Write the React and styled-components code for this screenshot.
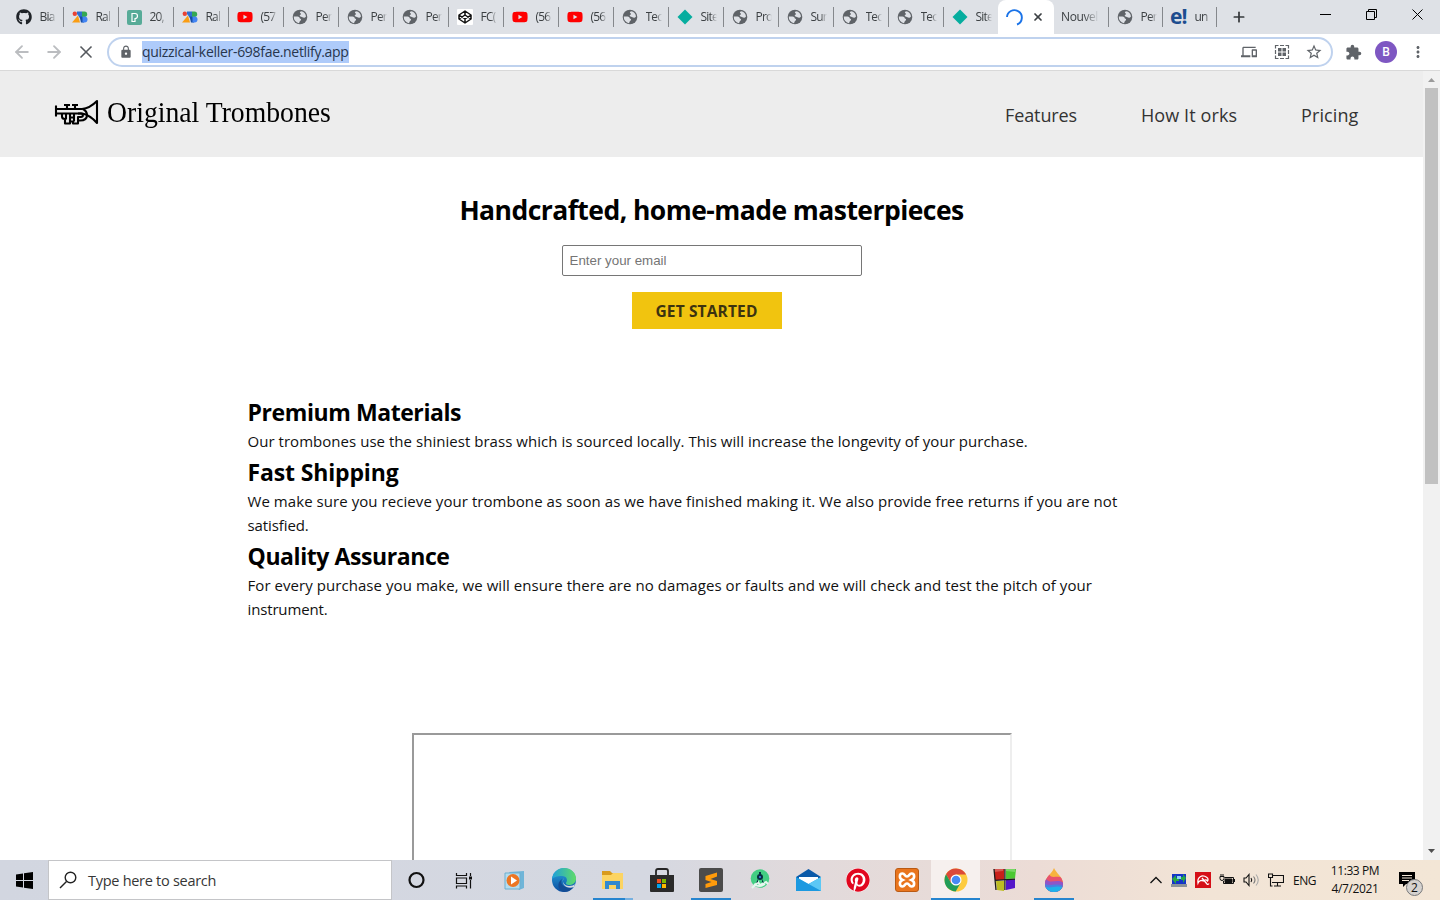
import React from 'react';
import styled, { createGlobalStyle, css } from 'styled-components';
import { FaGithub, FaYoutube, FaPinterest } from 'react-icons/fa';
import { MdLock, MdExtension, MdStarBorder, MdDevices, MdMoreVert } from 'react-icons/md';
import { ArrowLeft, ArrowRight, X, Plus } from 'lucide-react';

const Global = createGlobalStyle`
  * { box-sizing: border-box; }
  body { margin: 0; overflow: hidden; background: #fff; font-family: 'Open Sans', 'Noto Sans', sans-serif; }
  svg { display: block; flex: none; }
`;

const Screen = styled.div`
  width: 1440px;
  height: 900px;
  display: flex;
  flex-direction: column;
  overflow: hidden;
`;

/* Browser tabs */
const TabStrip = styled.div`
  height: 34px;
  flex: none;
  background: #dee1e6;
  display: flex;
  padding-left: 8px;
`;
const Tab = styled.div`
  width: ${p => p.$w || 55}px;
  flex: none;
  height: 34px;
  display: flex;
  align-items: center;
  padding-left: ${p => p.$pad ?? 8}px;
  background: linear-gradient(#85888c, #85888c) right 0 top 7px / 1px 20px no-repeat;
  ${p => p.$plain && css`background: none;`}
`;
const TabTitle = styled.span`
  margin-left: ${p => p.$gap ?? 7.5}px;
  width: ${p => p.$w || 16}px;
  overflow: hidden;
  white-space: nowrap;
  font-size: 12px;
  letter-spacing: ${p => p.$ls ?? -0.8}px;
  line-height: 18px;
  color: #3c4043;
  mask-image: linear-gradient(90deg, #000 60%, transparent);
`;
const ActiveTab = styled.div`
  width: 56px;
  flex: none;
  height: 34px;
  background: #fff;
  border-radius: 8px 8px 0 0;
  display: flex;
  align-items: center;
  gap: 9px;
  padding-left: 8px;
  margin-left: -1px;
`;
const NewTab = styled.div`
  display: flex;
  align-items: center;
  margin-left: 14px;
  color: #35383b;
`;
const WindowButtons = styled.div`
  display: flex;
  margin-left: auto;
  height: 28px;
  align-items: center;
  gap: 35px;
  padding-right: 17px;
`;

/* Address bar */
const Toolbar = styled.div`
  height: 37px;
  flex: none;
  background: #fff;
  border-bottom: 1px solid #d9d9d9;
  display: flex;
  align-items: center;
`;
const NavButtons = styled.div`
  width: 107px;
  display: flex;
  align-items: center;
  gap: 12px;
  padding-left: 12px;
`;
const Omnibox = styled.div`
  width: 1226px;
  height: 30px;
  border: 2px solid #bfd2ee;
  border-radius: 15px;
  display: flex;
  align-items: center;
  padding: 0 8px 0 10px;
  color: #5f6368;
`;
const Url = styled.span`
  height: 22px;
  line-height: 21px;
  margin-left: 9px;
  width: 207px;
  white-space: nowrap;
  background: #aecbfa;
  color: #27364d;
  font-size: 14px;
  letter-spacing: -0.3px;
`;
const OmniActions = styled.div`
  display: flex;
  align-items: center;
  gap: 15px;
  margin-left: auto;
  & > :first-child { margin-right: 2px; }
`;
const ToolbarActions = styled.div`
  flex: 1;
  display: flex;
  align-items: center;
  padding-left: 12px;
  color: #5f6368;
`;
const Avatar = styled.div`
  width: 22px;
  height: 22px;
  margin: 0 12px 0 13px;
  border-radius: 50%;
  background: #7e57c2;
  color: #fff;
  font: 500 12px/23px Roboto, sans-serif;
  text-align: center;
`;

/* Web page */
const Viewport = styled.div`
  height: 789px;
  flex: none;
  display: flex;
`;
const Page = styled.div`
  width: 1423px;
  height: 789px;
  overflow: hidden;
  background: #fff;
`;
const Header = styled.header`
  height: 86px;
  background: #ededed;
  display: flex;
  align-items: flex-start;
  padding: 24px 64px 0 54px;
`;
const Brand = styled.div`
  display: flex;
  height: 34px;
`;
const BrandName = styled.span`
  margin-left: 8px;
  height: 34px;
  font: 30px/33px 'Liberation Serif', serif;
  color: #000;
  white-space: nowrap;
  transform: scaleX(0.923);
  transform-origin: left;
`;
const Nav = styled.nav`
  margin-left: auto;
  display: flex;
  gap: 64px;
  padding-top: 6px;
`;
const NavLink = styled.a`
  width: ${p => p.$w}px;
  font-size: 18px;
  line-height: 28px;
  color: #333;
  white-space: nowrap;
  letter-spacing: ${p => p.$ls || 0}px;
`;
const Hero = styled.section`
  display: flex;
  flex-direction: column;
  align-items: center;
  padding-top: 33px;
`;
const HeroTitle = styled.h1`
  margin: 0;
  font-size: 26.5px;
  line-height: 40px;
  font-weight: 700;
  letter-spacing: -0.55px;
  color: #000;
  white-space: nowrap;
`;
const Email = styled.input`
  width: 300px;
  height: 31px;
  margin-top: 15px;
  padding: 0 7px;
  border: 1px solid #767676;
  border-radius: 2px;
  font: 13.33px 'Liberation Sans', sans-serif;
  &::placeholder { color: #757575; opacity: 1; }
`;
const Cta = styled.button`
  width: 150px;
  height: 37px;
  margin: 16px 10px 0 0;
  padding: 1px 0 0;
  border: 0;
  background: #f1c40f;
  color: #3c3310;
  font: 700 15.5px/36px 'Open Sans', sans-serif;
  letter-spacing: 0.15px;
`;
const FeatureList = styled.section`
  width: 900px;
  margin: 67px 0 0 247.5px;
`;
const FeatureTitle = styled.h2`
  margin: 0;
  height: 33px;
  line-height: 33px;
  font-size: 23px;
  font-weight: 700;
  color: #000;
  letter-spacing: ${p => p.$ls || 0}px;
`;
const FeatureText = styled.p`
  margin: 0 0 3px;
  font-size: 15px;
  line-height: 24px;
  color: #111;
`;
const Line = styled.span`
  display: block;
  white-space: nowrap;
  letter-spacing: ${p => p.$ls}px;
`;
const VideoFrame = styled.div`
  width: 600px;
  height: 300px;
  margin: 112px 0 0 412px;
  border: 2px solid;
  border-color: #9a9a9a #eee #eee #9a9a9a;
`;
const Scrollbar = styled.div`
  width: 17px;
  background: #f1f1f1;
  display: flex;
  flex-direction: column;
  align-items: center;
  padding: 6px 0 6px;
`;
const Thumb = styled.div`
  width: 13px;
  height: 396px;
  margin: 5px 0 auto;
  background: #c1c1c1;
`;

/* Taskbar */
const Taskbar = styled.div`
  height: 40px;
  flex: none;
  display: flex;
  background: linear-gradient(90deg, #d2d6e0 0, #d5d8e1 45%, #e2dadb 57%, #ecdcd6 72%, #f2e4d6 84%, #f3e6d6 100%);
`;
const StartButton = styled.div`
  width: 48px;
  display: flex;
  align-items: center;
  justify-content: center;
`;
const Search = styled.div`
  width: 344px;
  height: 40px;
  border: 1px solid #c4c5c8;
  background: #fff;
  display: flex;
  align-items: center;
  padding-left: 10px;
  color: #363636;
  font-size: 14.5px;
`;
const SearchLabel = styled.span`
  margin-left: 11px;
  letter-spacing: -0.28px;
`;
const Apps = styled.div`
  display: flex;
`;
const Slot = styled.div`
  width: 49px;
  height: 40px;
  flex: none;
  display: flex;
  flex-direction: column;
  align-items: center;
  justify-content: space-between;
  background: ${p => (p.$current ? '#f6f0ee' : 'transparent')};
`;
const SlotIcon = styled.div`
  height: 38px;
  padding-top: 2px;
  display: flex;
  align-items: center;
`;
const Underline = styled.div`
  height: 2px;
  width: ${p => p.$w}px;
  background: ${p => (p.$stacked ? 'linear-gradient(90deg, #2685cf 80%, #76b0e0 80%)' : '#2685cf')};
`;
const Tray = styled.div`
  margin-left: auto;
  padding-right: 11px;
  display: flex;
  align-items: center;
  gap: 8px;
  color: #111;
  font-size: 12px;
`;
const Language = styled.span`
  width: 24px;
  margin-left: 1px;
  font-size: 12px;
  letter-spacing: -0.5px;
`;
const Clock = styled.div`
  width: 60px;
  text-align: center;
  line-height: 18px;
  letter-spacing: -0.4px;
  white-space: nowrap;
`;
const Notifications = styled.div`
  position: relative;
  width: 34px;
  height: 40px;
  margin-left: 2px;
  padding: 11px 0 0 4px;
`;
const Count = styled.span`
  position: absolute;
  left: 11px;
  top: 19px;
  width: 17px;
  height: 17px;
  border: 1px solid #77787a;
  border-radius: 50%;
  background: #d5d2cf;
  font-size: 12px;
  line-height: 15px;
  text-align: center;
`;

const Globe = () => (
  <svg width="16" height="16" viewBox="0 0 16 16"><circle cx="8" cy="8" r="7.3" fill="#5f6368" /><path d="M9 2.200a6 6 0 015 5.300c-1 1.500-2.500 1.500-3.500.8-.8-.7-1.700-.3-2.500-1-.7-.8 0-1.700.8-1.900.5-.2.200-.9-.4-1.100C7.500 3.800 8 2.500 9 2.200zM1.800 7.500h3.700c1.500 0 2.300 1 2.300 2 1 .2 1.500.8 1.200 1.600-.3.700-1.200.8-1.400 1.700-.1.600-.3 1.100-.8 1.500A6.400 6.400 0 011.800 7.500z" fill="#dee1e6" /></svg>
);
const Codepen = () => (
  <svg width="16" height="16" viewBox="0 0 16 16"><rect width="16" height="16" rx="1" fill="#fff" /><path d="M8 2l6 4v4l-6 4-6-4V6zM8 2v4M8 10v4M2 6l6 4 6-4M2 10l6-4 6 4" fill="none" stroke="#111" strokeWidth="1.5" strokeLinejoin="round" /></svg>
);
const Netlify = () => <svg width="16" height="16" viewBox="0 0 16 16"><path d="M8 .5L15.500 8 8 15.500.5 8z" fill="#06ad9f" /></svg>;
const Rally = () => (
  <svg width="16" height="16" viewBox="0 0 16 16"><circle cx="2.8" cy="4.8" r="2.2" fill="#e94235" /><path d="M0 13.500L6 6.500l2 7z" fill="#fa9d13" /><path d="M5 2.500h5v6.500H8L5 5z" fill="#2d6fd3" /><path d="M7.500 7.500H12v6H9z" fill="#174ea6" /><path d="M10 2.500h2.500a2.700 2.700 0 010 5.400H10z" fill="#34a853" /><path d="M10.500 7.500h2a3 3 0 010 6h-2z" fill="#4285f4" /></svg>
);
const Pexels = () => <svg width="15" height="15" viewBox="0 0 15 15"><rect width="15" height="15" rx="2" fill="#57ab98" /><path d="M5 11.500V3.500h3a2.500 2.500 0 010 5v3z" fill="none" stroke="#fff" strokeWidth="1.2" /></svg>;
const ELogo = styled.span`
  width: 17px;
  font: 700 21px/29px 'Open Sans', sans-serif;
  letter-spacing: -1px;
  color: #1d4d8f;
  height: 30px;
`;

const favicons = {
  github: <FaGithub size={16} color="#1f2328" />,
  globe: <Globe />,
  youtube: <FaYoutube size={16} color="#f00" />,
  codepen: <Codepen />,
  netlify: <Netlify />,
  rally: <Rally />,
  pexels: <Pexels />,
};
const tabs = [
  ['github', 'Bia'], ['rally', 'Ral'], ['pexels', '20,'], ['rally', 'Ral'], ['youtube', '(57'],
  ['globe', 'Per'], ['globe', 'Per'], ['globe', 'Per'], ['codepen', 'FC('], ['youtube', '(56'],
  ['youtube', '(56'], ['globe', 'Tec'], ['netlify', 'Site'], ['globe', 'Pro'], ['globe', 'Sur'],
  ['globe', 'Tec'], ['globe', 'Tec'],
];

const Trumpet = () => (
  <svg width="45" height="34" viewBox="0 0 45 34" fill="none" stroke="#000" strokeWidth="2.1" strokeLinejoin="round">
    <path d="M2 10.500v11M2 14h26c6-.5 11-4 15-8v22c-4-4.500-9-8.500-15-9.500H2" />
    <path d="M13 10v4M21 10v4M10 10h6M18 10h6" />
    <path d="M8 18.500v3c0 1.500.8 2.500 3 2.500v4.500h5v-2h3v2h5v-3h2c5 0 7-2.500 7-5.500s-1.500-4.500-4-6M12 18.500v6M16 18.500v8M20 18.500v8M16 22.500h4M24 18.500h3c2.500 0 2.500 3.500 0 3.500h-3v4" />
  </svg>
);

const Cast = () => (
  <svg width="16" height="16" viewBox="0 0 16 16" fill="none" stroke="#5f6368" strokeWidth="1.2"><path d="M1.500 4.500v-3h3M6 1.500h4M11.500 1.500h3v3M14.500 6v4M14.500 11.500v3h-3M10 14.500H6M4.500 14.500h-3v-3M1.500 10V6" /><path d="M4 4h3.500v3.500H4zM8.500 4H12v3.500H8.500zM4 8.500h3.500V12H4zM8.500 8.500H12V12H8.500z" fill="#5f6368" stroke="none" /></svg>
);

const WindowsLogo = () => <svg width="17" height="17" viewBox="0 0 17 17"><path d="M0 2.400L7 1.400V8H0zM8 1.300L17 0v8H8zM0 9h7v6.600l-7-1zM8 9h9v8l-9-1.300z" /></svg>;
const Cortana = () => <svg width="18" height="18"><circle cx="8.5" cy="9" r="7" fill="none" stroke="#111" strokeWidth="2.2" /></svg>;
const TaskView = () => <svg width="21" height="17" viewBox="0 0 21 17" fill="none" stroke="#111" strokeWidth="1.2"><path d="M1.500 1v2.500h10V1M1.500 6h10v5.500h-10zM1.500 16.500V14h10v2.500M15.500 1v3M15.500 8v8.500" /><path d="M14 4.500h3v3h-3z" fill="#111" stroke="none" /></svg>;
const MediaPlayer = () => <svg width="22" height="21" viewBox="0 0 22 21"><path d="M5 2l15-1v17l-5 2z" fill="#70b5d8" /><path d="M1 3h15v16H1z" fill="#b4dcee" stroke="#6cafd0" /><circle cx="9" cy="10.5" r="6.5" fill="#ed7623" /><path d="M7 6.500l6 4-6 4z" fill="#fff" /></svg>;
const Edge = () => (
  <svg width="24" height="24" viewBox="0 0 24 24"><defs><linearGradient id="eg"><stop stopColor="#1d9fdc" /><stop offset="1" stopColor="#60dc67" /></linearGradient><linearGradient id="eb" x2="0" y2="1"><stop stopColor="#28a8df" /><stop offset="1" stopColor="#0b4da0" /></linearGradient></defs><circle cx="12" cy="12" r="12" fill="url(#eb)" /><path d="M0 11C1 4 6 0 12 0c7 0 12 5 12 10.500 0 4-3 6.500-6.500 6.500-3 0-4.500-1.500-3-3 1-2 .5-6-4.500-6-5 0-9 1.500-10 3z" fill="url(#eg)" /><path d="M10 11c-3 6 4 11 12 7-2 3-5 6-10 6-6-1-8-9-2-13z" fill="#134c94" /><path d="M12 10c-3 3 0 8 5 8 3 0 5-1 6-2l-1 3c-7 3-14-3-10-9z" fill="#d5d8e1" /></svg>
);
const Explorer = () => <svg width="23" height="20" viewBox="0 0 23 20"><path d="M1 1h8l2 2h11v5H1z" fill="#d99b1d" /><path d="M1 5h9l2-2h10v16H1z" fill="#fcd462" /><path d="M4 19v-8h15v8h-4v-4H8v4z" fill="#3289d0" /></svg>;
const Store = () => <svg width="24" height="25" viewBox="0 0 24 25"><path d="M6 8V3q0-2 2-2h8q2 0 2 2v5" fill="none" stroke="#262626" strokeWidth="1.8" /><path d="M0 7h24v16q0 1-1 1H1q-1 0-1-1z" fill="#2a2a2a" /><path d="M7 11h4v4H7z" fill="#f25022" /><path d="M12 11h4v4h-4z" fill="#7fba00" /><path d="M7 16h4v4H7z" fill="#00a4ef" /><path d="M12 16h4v4h-4z" fill="#ffb900" /></svg>;
const Sublime = () => <svg width="24" height="24" viewBox="0 0 24 24"><rect width="24" height="24" rx="2" fill="#4b4b4b" /><path d="M6.500 8L18 4.500v4L11.500 11l6.500 2v4L6.500 20v-4l6-2-6-2z" fill="#ff9b0b" /></svg>;
const AndroidStudio = () => <svg width="20" height="22" viewBox="0 0 20 22"><circle cx="10" cy="9.5" r="9.3" fill="#43ce83" /><path d="M2 19l6-6 2 3 6-3 2 2M4 15q5 4 11 0" fill="none" stroke="#e7f7ef" strokeWidth="2" /><circle cx="10" cy="8" r="3" fill="#073042" /><circle cx="10" cy="8" r="1" fill="#4285f4" /><path d="M9 3h2v3H9zM8 10l-2 4 2-1zM12 10l2 4-2-1z" fill="#073042" /></svg>;
const Mail = () => <svg width="25" height="24" viewBox="0 0 25 24"><path d="M0 9l12.500-8L25 9v5H0z" fill="#0b5aa8" /><path d="M3 9h19v7H3z" fill="#fff" /><path d="M0 9l12.500 7L25 9v14H0z" fill="#24a7e8" /><path d="M12.500 16L25 9v14z" fill="#5cc8f5" /><path d="M0 9l25 14H0z" fill="#168ed9" opacity=".55" /></svg>;
const Pinterest = styled.div`
  width: 24px;
  height: 24px;
  border-radius: 50%;
  background: #fff;
`;
const Xampp = () => <svg width="24" height="24" viewBox="0 0 24 24"><rect x=".5" y=".5" width="23" height="23" rx="2.5" fill="#e9751d" stroke="#b95a14" /><path d="M7.500 12C4 10.500 4 5.500 7.500 5.500c2.500 0 2 3 4.500 3s2-3 4.500-3c3.500 0 3.500 5 0 6.500 3.500 1.500 3.500 6.500 0 6.500-2.500 0-2-3-4.500-3s-2 3-4.500 3c-3.500 0-3.500-5 0-6.500z" fill="none" stroke="#fff" strokeWidth="2.6" /></svg>;
const Chrome = () => <svg width="24" height="24" viewBox="0 0 24 24"><circle cx="12" cy="12" r="11.5" fill="#fdcb3f" /><path d="M12 6.500h10.100a11.500 11.500 0 00-20.100-.2L7 15z" fill="#dc4939" /><path d="M2 6.300A11.500 11.500 0 0011.700 23.500L16.500 15 12 17.300 7 15z" fill="#219d58" /><circle cx="12" cy="12" r="5.5" fill="#fff" /><circle cx="12" cy="12" r="4.3" fill="#4789f4" /></svg>;
const Cubes = () => <svg width="24" height="24" viewBox="0 0 24 24"><path d="M1 1l10 0v11l-9 0z" fill="#c9201a" /><path d="M13 1l10 0-1 9.500-9 .5z" fill="#4bc832" /><path d="M3 13l8 0v10l-7-1z" fill="#bcbc22" /><path d="M13 12l9-1v9l-9 2z" fill="#5416c9" /><path d="M1 1v3l9-1V1zM13 1v2l9 1V1z" fill="#fff" opacity=".25" /><path d="M1 1l2 21M11.900 1v21M2 12.400l20-1.200" fill="none" stroke="#1a1a1a" strokeWidth="1.3" /></svg>;
const Drop = () => (
  <svg width="20" height="25" viewBox="0 0 20 25"><defs><clipPath id="drop"><path d="M10 0c2 5 9 9 9 15.500C19 21 15 24 10 24S1 21 1 15.500C1 9 8 6 10 0z" /></clipPath></defs><g clipPath="url(#drop)"><path d="M0 0h20v25H0z" fill="#f7b33e" /><path d="M0 6h5c3 6 8 0 15 5v14H0z" fill="#e7526e" /><path d="M0 11h2c5 6 10-1 18 4v10H0z" fill="#8f55c8" /><path d="M0 15c6 5 10-1 20 3v7H0z" fill="#4c7fe0" /><path d="M0 18c6 4 12-2 20 2v5H0z" fill="#1fb2ea" /></g></svg>
);

const apps = [
  { icon: <Cortana /> }, { icon: <TaskView /> }, { icon: <MediaPlayer /> }, { icon: <Edge /> },
  { icon: <Explorer />, line: 40, stacked: true }, { icon: <Store /> }, { icon: <Sublime />, line: 40 },
  { icon: <AndroidStudio /> }, { icon: <Mail /> }, { icon: <Pinterest><FaPinterest size={24} color="#e1071f" /></Pinterest> },
  { icon: <Xampp /> }, { icon: <Chrome />, line: 49, current: true }, { icon: <Cubes /> }, { icon: <Drop />, line: 40 },
];

const features = [
  { title: 'Premium Materials', ls: -0.42, lines: [['Our trombones use the shiniest brass which is sourced locally. This will increase the longevity of your purchase.', 0.036]] },
  { title: 'Fast Shipping', ls: -0.15, lines: [['We make sure you recieve your trombone as soon as we have finished making it. We also provide free returns if you are not', 0.062], ['satisfied.', -0.1]] },
  { title: 'Quality Assurance', ls: -0.42, lines: [['For every purchase you make, we will ensure there are no damages or faults and we will check and test the pitch of your', 0.06], ['instrument.', -0.15]] },
];

export default function App() {
  return (
    <Screen>
      <Global />
      <TabStrip>
        {tabs.map(([icon, title], i) => (
          <Tab key={i} $w={i ? 55 : 56}>{favicons[icon]}<TabTitle>{title}</TabTitle></Tab>
        ))}
        <Tab $plain>{favicons.netlify}<TabTitle>Site</TabTitle></Tab>
        <ActiveTab>
          <svg width="17" height="17" viewBox="0 0 17 17"><path d="M1 8a7.300 7.300 0 0111-5.800A7.300 7.300 0 0111 15.500" fill="none" stroke="#1a73e8" strokeWidth="1.9" /></svg>
          <X size={12} strokeWidth={3.5} color="#3c4043" />
        </ActiveTab>
        <Tab $w={55} $pad={7}><TabTitle $gap={0} $w={38} $ls={-0.4}>Nouvel</TabTitle></Tab>
        <Tab $w={54}>{favicons.globe}<TabTitle>Per</TabTitle></Tab>
        <Tab $w={54} $pad={7}><ELogo>e!</ELogo><TabTitle>un</TabTitle></Tab>
        <NewTab><Plus size={16} strokeWidth={2.6} /></NewTab>
        <WindowButtons>
          <svg width="11" height="11"><path d="M0 5.500h11" stroke="#000" /></svg>
          <svg width="11" height="11" fill="none" stroke="#000"><path d="M.5 2.500h8v8h-8zM2.500 2.500v-2h8v8h-2" /></svg>
          <svg width="11" height="11" stroke="#000"><path d="M.5.500l10 10M10.500.500l-10 10" /></svg>
        </WindowButtons>
      </TabStrip>
      <Toolbar>
        <NavButtons>
          <ArrowLeft size={20} color="#bbbdc0" strokeWidth={2.2} />
          <ArrowRight size={20} color="#bbbdc0" strokeWidth={2.2} />
          <X size={20} color="#55595e" strokeWidth={2} />
        </NavButtons>
        <Omnibox>
          <MdLock size={14} />
          <Url>quizzical-keller-698fae.netlify.app</Url>
          <OmniActions><MdDevices size={16} /><Cast /><MdStarBorder size={18} /></OmniActions>
        </Omnibox>
        <ToolbarActions>
          <MdExtension size={17} /><Avatar>B</Avatar><MdMoreVert size={18} />
        </ToolbarActions>
      </Toolbar>
      <Viewport>
        <Page>
          <Header>
            <Brand><Trumpet /><BrandName>Original Trombones</BrandName></Brand>
            <Nav>
              <NavLink $w={72} $ls={-0.1}>Features</NavLink>
              <NavLink $w={96} $ls={0.1}>How It orks</NavLink>
              <NavLink $w={58} $ls={0.1}>Pricing</NavLink>
            </Nav>
          </Header>
          <Hero>
            <HeroTitle>Handcrafted, home-made masterpieces</HeroTitle>
            <Email placeholder="Enter your email" />
            <Cta>GET STARTED</Cta>
          </Hero>
          <FeatureList>
            {features.map(f => (
              <React.Fragment key={f.title}>
                <FeatureTitle $ls={f.ls}>{f.title}</FeatureTitle>
                <FeatureText>{f.lines.map(([t, ls]) => <Line key={t} $ls={ls}>{t}</Line>)}</FeatureText>
              </React.Fragment>
            ))}
          </FeatureList>
          <VideoFrame />
        </Page>
        <Scrollbar>
          <svg width="7" height="6"><path d="M0 5l3.500-4L7 5z" fill="#9b9b9b" /></svg>
          <Thumb />
          <svg width="7" height="5"><path d="M0 0h7L3.500 4z" fill="#505050" /></svg>
        </Scrollbar>
      </Viewport>
      <Taskbar>
        <StartButton><WindowsLogo /></StartButton>
        <Search>
          <svg width="18" height="18" viewBox="0 0 18 18" fill="none" stroke="#222" strokeWidth="1.4"><circle cx="11.5" cy="6.5" r="5.3" /><path d="M7.500 10.500L1 17" /></svg>
          <SearchLabel>Type here to search</SearchLabel>
        </Search>
        <Apps>
          {apps.map((a, i) => (
            <Slot key={i} $current={a.current}>
              <SlotIcon>{a.icon}</SlotIcon>
              {a.line && <Underline $w={a.line} $stacked={a.stacked} />}
            </Slot>
          ))}
        </Apps>
        <Tray>
          <svg width="14" height="8" fill="none" stroke="#111" strokeWidth="1.3"><path d="M1.500 7L7 1.500 12.500 7" /></svg>
          <svg width="16" height="15" viewBox="0 0 16 15"><path d="M1 1h14v10H1z" fill="#1434c9" /><path d="M0 11h16v3H0z" fill="#8b9299" /><path d="M1 6l4-4v3h3v3H5v3zM15 5l-3-4v3h-2v3h2v3z" fill="#28a745" /><path d="M6 3h4v3H6z" fill="#8bd2f3" /></svg>
          <svg width="16" height="16" viewBox="0 0 16 16"><path d="M0 0h16v16H0z" fill="#d50f17" /><path d="M3 11C2 5 7 2 12 5.500c1.500 1 1 3 .5 3.500-1.500-2-3-1-4 0C7 8 4 8.500 3 11zM7 6l5 6q1 1 2-.5" fill="none" stroke="#fff" strokeWidth="1.3" /></svg>
          <svg width="16" height="14" viewBox="0 0 16 14" fill="none" stroke="#111"><path d="M5.500 4.500h9v6h-10V8M1 3.500h4v2q0 2-2 2t-2-2zM2 1v2M4 1v2M15.500 6v3" /><path d="M6 6h7v3.500H6z" fill="#111" /></svg>
          <svg width="17" height="14" viewBox="0 0 17 14" fill="none" stroke="#111" strokeWidth="1.1"><path d="M1 5h2l3-3.500v11L3 9H1zM8 5q1.500 2 0 4" /><path d="M10.500 3.500q3 3.500 0 7" stroke="#777" /><path d="M13 1.500q4.500 5.500 0 11" stroke="#aaa" /></svg>
          <svg width="16" height="14" viewBox="0 0 16 14" fill="none" stroke="#111" strokeWidth="1.1"><path d="M5 2.500h10.500v7H4M9.500 9.500v3.500M6 13h7M.5 1h4v3.500h-4zM2.500 4.500V13h2" /></svg>
          <Language>ENG</Language>
          <Clock>11:33 PM<br />4/7/2021</Clock>
          <Notifications>
            <svg width="16" height="17" viewBox="0 0 16 17"><path d="M0 1h16v12H7l-3 3v-3H0z" /><path d="M3 4.500h10M3 7h10M3 9.500h7" stroke="#f3e6d6" /></svg>
            <Count>2</Count>
          </Notifications>
        </Tray>
      </Taskbar>
    </Screen>
  );
}
